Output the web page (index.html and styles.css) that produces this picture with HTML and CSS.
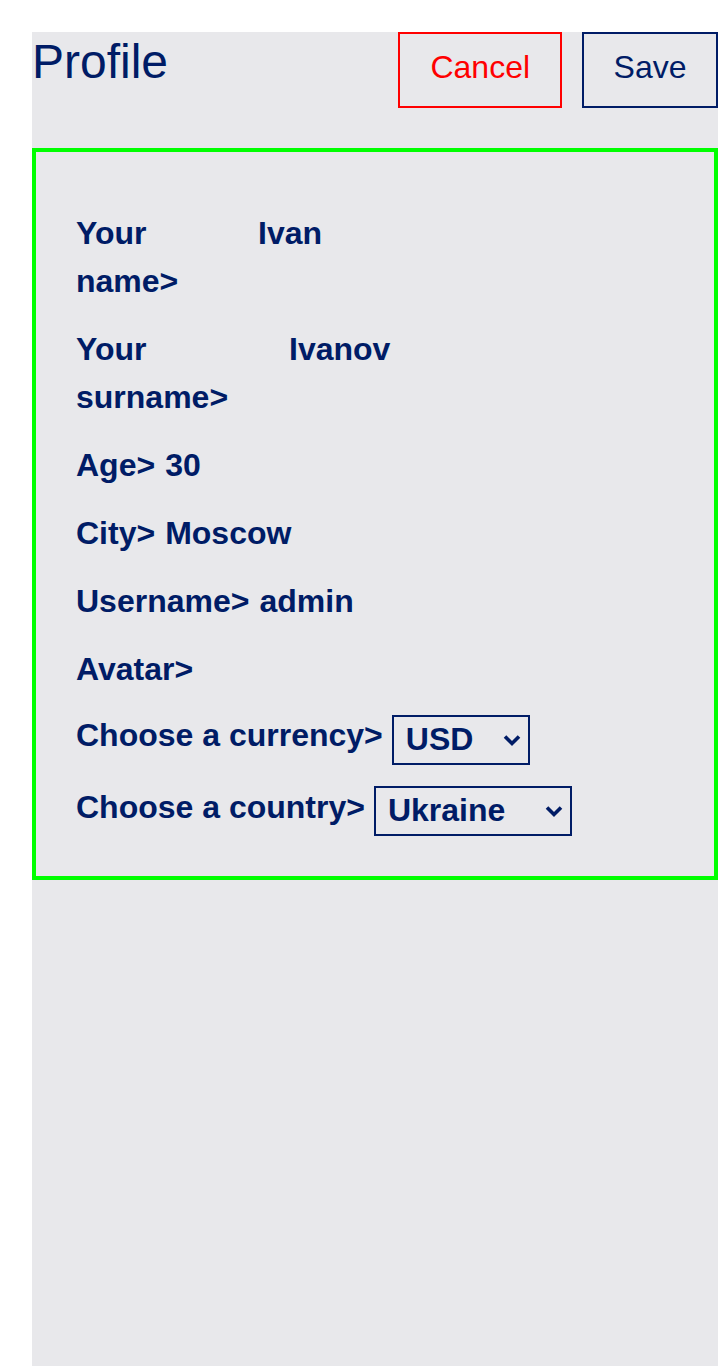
FILE: index.html
```html
<!DOCTYPE html>
<html lang="en">
<head>
<meta charset="utf-8">
<title>Profile</title>
<link rel="stylesheet" href="styles.css">
</head>
<body>
<div class="page">
  <header class="header">
    <h1 class="title">Profile</h1>
    <div class="actions">
      <button type="button" class="btn btn--cancel">Cancel</button>
      <button type="button" class="btn btn--save">Save</button>
    </div>
  </header>
  <form class="card">
    <div class="field">
      <span class="field__label field__label--name">Your name&gt;</span>
      <span class="field__value">Ivan</span>
    </div>
    <div class="field">
      <span class="field__label field__label--surname">Your surname&gt;</span>
      <span class="field__value">Ivanov</span>
    </div>
    <div class="field">
      <span class="field__label">Age&gt;</span>
      <span class="field__value">30</span>
    </div>
    <div class="field">
      <span class="field__label">City&gt;</span>
      <span class="field__value">Moscow</span>
    </div>
    <div class="field">
      <span class="field__label">Username&gt;</span>
      <span class="field__value">admin</span>
    </div>
    <div class="field">
      <span class="field__label">Avatar&gt;</span>
    </div>
    <div class="field field--select">
      <label class="field__label" for="currency">Choose a currency&gt;</label>
      <span class="select-wrap">
        <select id="currency" class="select select--currency">
          <option>USD</option>
          <option>EUR</option>
          <option>RUB</option>
        </select>
        <svg class="select-arrow" width="18" height="13" viewBox="0 0 18 13" aria-hidden="true">
          <path d="M2 2.5 L9 9.5 L16 2.5" fill="none" stroke="currentColor" stroke-width="3.6"/>
        </svg>
      </span>
    </div>
    <div class="field field--select">
      <label class="field__label" for="country">Choose a country&gt;</label>
      <span class="select-wrap">
        <select id="country" class="select select--country">
          <option>Ukraine</option>
          <option>Russia</option>
          <option>Armenia</option>
        </select>
        <svg class="select-arrow" width="18" height="13" viewBox="0 0 18 13" aria-hidden="true">
          <path d="M2 2.5 L9 9.5 L16 2.5" fill="none" stroke="currentColor" stroke-width="3.6"/>
        </svg>
      </span>
    </div>
  </form>
</div>
</body>
</html>
```

FILE: styles.css
```css
html,
body {
  margin: 0;
}

body {
  background: #ffffff;
  padding: 32px 0 0 32px;
  font-family: "Liberation Sans", Arial, sans-serif;
  color: #001c66;
}

.page {
  background: #e8e8eb;
  min-height: calc(100vh - 32px);
}

.header {
  display: flex;
  justify-content: space-between;
  align-items: baseline;
}

.title {
  margin: 0;
  font-size: 48px;
  font-weight: 400;
  line-height: normal;
}

.actions {
  display: flex;
  gap: 20px;
  align-items: baseline;
}

.btn {
  font: inherit;
  font-size: 32px;
  line-height: normal;
  background: transparent;
  padding: 15px 30px 20px;
  border: 2px solid currentColor;
  border-radius: 0;
  margin: 0;
  cursor: pointer;
}

.btn--cancel {
  color: #ff0000;
}

.btn--save {
  color: #001c66;
  padding-left: 29.5px;
  padding-right: 29.5px;
}

.card {
  margin: 40px 0 0;
  border: 4px solid #00ff00;
  padding: 57px 40px 40px;
  display: flex;
  flex-direction: column;
  gap: 20px;
  font-size: 32px;
  font-weight: 700;
  line-height: 48px;
}

.field {
  display: flex;
  gap: 10px;
  align-items: baseline;
}

.field__label {
  flex: none;
}

.field__label--name {
  width: 172px;
}

.field__label--surname {
  width: 203px;
}

.field--select {
  align-items: flex-start;
  gap: 9px;
}

.field--select .field__label {
  margin-top: -2px;
}

.select-wrap {
  position: relative;
  display: inline-block;
  margin-top: 1.5px;
  color: #001c66;
}

.select {
  display: block;
  -webkit-appearance: none;
  appearance: none;
  height: 50px;
  box-sizing: border-box;
  font: inherit;
  line-height: normal;
  color: inherit;
  background: transparent;
  border: 2px solid currentColor;
  border-radius: 0;
  padding: 0 0 2px 12px;
  margin: 0;
}

.select--currency {
  width: 138px;
}

.select--country {
  width: 198px;
}

.select-arrow {
  position: absolute;
  right: 9px;
  top: 19px;
  pointer-events: none;
}
```
